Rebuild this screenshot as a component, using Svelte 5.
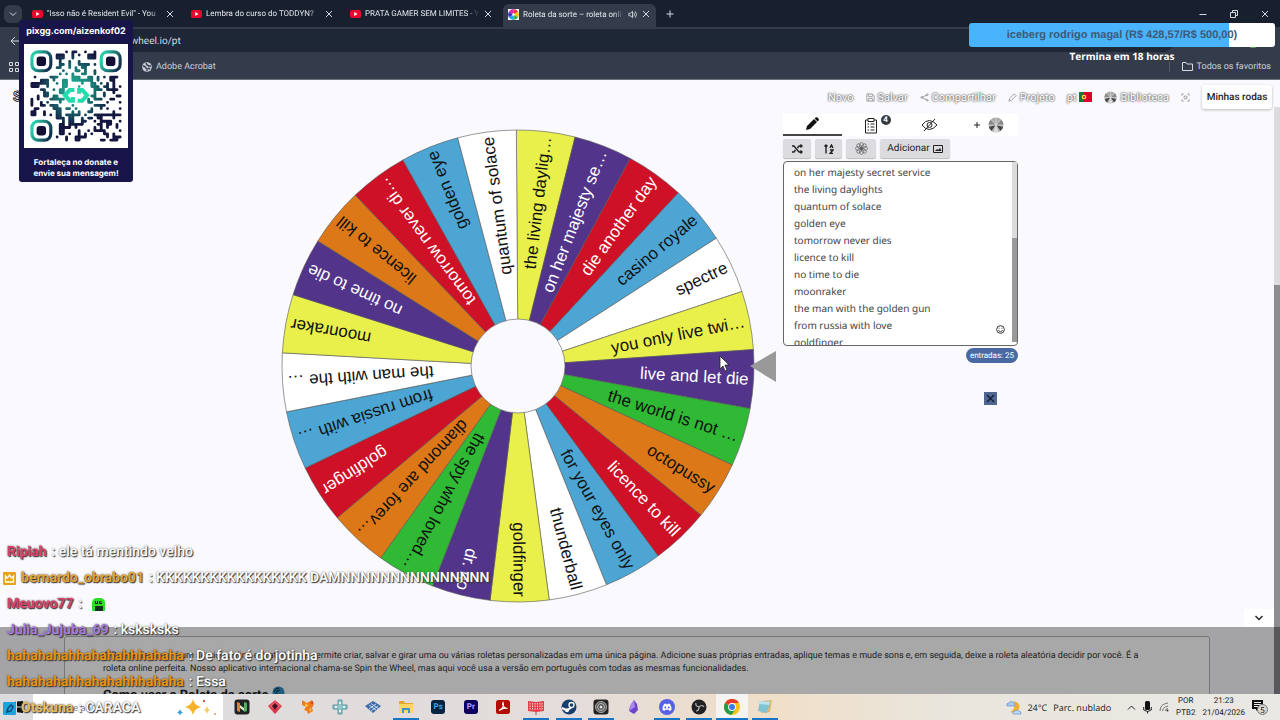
<script>
    const yellow = '#e9f04b', purple = '#52358a', red = '#ce1126', blue = '#4ca5d3', white = '#fff', green = '#2fb934', orange = '#dc7818'

    const slices = [
        ['the living daylig…', yellow], ['on her majesty se…', purple], ['die another day', red],
        ['casino royale', blue], ['spectre', white], ['you only live twi…', yellow],
        ['live and let die', purple], ['the world is not …', green], ['octopussy', orange],
        ['licence to kill', red], ['for your eyes only', blue], ['thunderball', white],
        ['goldfinger', yellow], ['dr. no', purple], ['the spy who loved…', green],
        ['diamond are forev…', orange], ['goldfinger', red], ['from russia with …', blue],
        ['the man with the …', white], ['moonraker', yellow], ['no time to die', purple],
        ['licence to kill', orange], ['tomorrow never di…', red], ['golden eye', blue],
        ['quantum of solace', white]
    ]

    const step = 360 / slices.length
    const start = -90.4
    const R = 236

    function point(deg) {
        const a = deg * Math.PI / 180
        return (R * Math.cos(a)).toFixed(2) + ' ' + (R * Math.sin(a)).toFixed(2)
    }

    function slicePath(i) {
        return `M0 0L${point(start + i * step)}A${R} ${R} 0 0 1 ${point(start + (i + 1) * step)}Z`
    }

    let entries = $state(`on her majesty secret service
the living daylights
quantum of solace
golden eye
tomorrow never dies
licence to kill
no time to die
moonraker
the man with the golden gun
from russia with love
goldfinger`)

    const tabs = ['"Isso não é Resident Evil" - You', 'Lembra do curso do TODDYN?', 'PRATA GAMER SEM LIMITES - Y']

    const chat = [
        { user: 'Ripiah', color: '#d9436f', text: 'ele tá mentindo velho' },
        { user: 'bernardo_obrabo01', color: '#e3a437', text: 'KKKKKKKKKKKKKKKKK DAMNNNNNNNNNNNNNNN', badge: 'crown' },
        { user: 'Meuovo77', color: '#d9436f', text: '', frog: true },
        { user: 'Julia_Jujuba_69', color: '#a77bdd', text: 'ksksksks' },
        { user: 'hahahahahhahahahhhahaha', color: '#e8920f', text: 'De fato é do jotinha' },
        { user: 'hahahahahhahahahhhahaha', color: '#e8920f', text: 'Essa' },
        { user: 'Otskuna', color: '#e5bd62', text: 'CARACA', badge: 'prime' }
    ]

    // QR modules, 29 x 29, joined to their neighbours by round strokes
    const N = 29
    function corner(x, y) {
        return (x < 8 && y < 8) || (x > 20 && y < 8) || (x < 8 && y > 20) || (x > 10 && x < 18 && y > 11 && y < 17)
    }
    function dark(x, y) {
        if (x >= N || y >= N || corner(x, y)) return false
        let h = (x * 73856093) ^ (y * 19349663) ^ 0x5bd1e
        h = Math.imul(h ^ (h >>> 13), 1274126177)
        return ((h ^ (h >>> 16)) & 255) < 122
    }
    let qr = ''
    for (let y = 0; y < N; y++) {
        for (let x = 0; x < N; x++) {
            if (!dark(x, y)) continue
            qr += `M${x + .5} ${y + .5}h.01`
            if (dark(x + 1, y)) qr += `M${x + .5} ${y + .5}h1`
            if (dark(x, y + 1)) qr += `M${x + .5} ${y + .5}v1`
        }
    }

    const apps = ['game', 'dice', 'fox', 'dpad', 'layers', 'files', 'Ps', 'Pr', 'acrobat', 'calendar', 'steam', 'disc', 'obsidian', 'discord', 'obs', 'chrome', 'notes']
    const open = ['files', 'calendar', 'steam', 'disc', 'discord', 'obs', 'chrome', 'notes']
</script>

{#snippet close()}
    <svg class="x" viewBox="0 0 10 10"><path d="M2 2l6 6M8 2l-6 6" /></svg>
{/snippet}

{#snippet miniwheel(size)}
    <svg width={size} height={size} viewBox="-8 -8 16 16">
        <circle r="7.5" fill="#aaa" stroke="none" />
        <path d="M0 0L-7 2A7.5 7.5 0 0 0 -4 6.300Z M0 0L4 6.300A7.500 7.500 0 0 0 7 2Z" fill="#444" stroke="none" />
        <path d="M0 0L-5 -5.500A7.500 7.500 0 0 0 -7.500 0Z M0 0L5 -5.500A7.500 7.500 0 0 1 7.500 0Z" fill="#888" stroke="none" />
        <path d="M0 0L-2.500 7A7.500 7.500 0 0 0 2.500 7Z" fill="#ddd" stroke="none" />
        <path d="M0 0V-7.500M0 0L-5 -5.500M0 0L5 -5.500M0 0H-7.500M0 0H7.500M0 0L-4 6M0 0L4 6" class="spokes" />
    </svg>
{/snippet}

<div class="screen">
    <div class="tabstrip">
        <button class="tabsearch" aria-label="Pesquisar guias"><svg width="8" height="8" viewBox="0 0 8 8"><path d="M1 2.500l3 3 3-3" class="line" /></svg></button>
        {#each tabs as tab}
            <div class="tab">
                <svg width="11" height="8" viewBox="0 0 11 8"><rect width="11" height="8" rx="2" fill="#e8082e" /><path d="M4.200 2v4l3.400-2z" fill="#fff" /></svg>
                <span>{tab}</span>
                <button aria-label="Fechar guia">{@render close()}</button>
            </div>
        {/each}
        <div class="tab active">
            <svg width="11" height="11" viewBox="0 0 12 12">
                <rect width="12" height="12" fill="#fff" />
                <path d="M6 6L6 0A6 6 0 0 1 11 3Z" fill="#e33" /><path d="M6 6L11 3A6 6 0 0 1 11 9Z" fill="#f5c400" />
                <path d="M6 6L11 9A6 6 0 0 1 6 12Z" fill="#36b04a" /><path d="M6 6V12A6 6 0 0 1 1 9Z" fill="#18a8e0" />
                <path d="M6 6L1 9A6 6 0 0 1 1 3Z" fill="#4034c8" /><path d="M6 6L1 3A6 6 0 0 1 6 0Z" fill="#e01cb4" />
                <circle cx="6" cy="6" r="1.500" fill="#fff" />
            </svg>
            <span>Roleta da sorte – roleta onli</span>
            <svg width="9" height="9" viewBox="0 0 10 10"><path d="M1 3.500h2l2-2v7l-2-2H1zM6.500 3q1.500 2 0 4M8 1.500q3 3.500 0 7" class="line" /></svg>
            <button aria-label="Fechar guia">{@render close()}</button>
        </div>
        <button class="plus" aria-label="Nova guia"><svg width="10" height="10" viewBox="0 0 10 10"><path d="M5 1.500v7M1.500 5h7" class="line" /></svg></button>
        <div class="window">
            <button aria-label="Minimizar"><svg width="10" height="10" viewBox="0 0 10 10"><path d="M1.500 5.500h7" class="line" /></svg></button>
            <button aria-label="Restaurar"><svg width="10" height="10" viewBox="0 0 10 10"><path d="M1.500 3.500h5v5h-5zM3.500 3.500v-2h5v5h-2" class="line" /></svg></button>
            <button aria-label="Fechar">{@render close()}</button>
        </div>
    </div>
    <div class="toolbar">
        <button aria-label="Voltar"><svg width="10" height="10" viewBox="0 0 10 10"><path d="M10 5H1M5 1L1 5l4 4" class="line" /></svg></button>
        <input class="url" aria-label="Endereço" value="spinthewheel.io/pt" />
        <span class="avatar"></span>
    </div>
    <div class="bookmarks">
        <svg class="grid" width="10" height="10" viewBox="0 0 10 10"><path d="M.5.5h3v3h-3zM6.500.5h3v3h-3zM.5 6.500h3v3h-3zM6.500 6.500h3v3h-3z" class="line" /></svg>
        <a href="#acrobat">
            <svg width="10" height="10" viewBox="0 0 10 10"><circle cx="5" cy="5" r="4.800" fill="#c9ced6" /><path d="M1 4q2 0 3 2l1 1v2M4 1l1 2 2 1h2M6 6l2 1" stroke="#343c4b" stroke-width="1.400" fill="none" /></svg>
            Adobe Acrobat
        </a>
        <a href="#favoritos" class="all">
            <svg width="11" height="9" viewBox="0 0 11 9"><path d="M.5.5h3.500l1 1.500h5.500v6.500H.5z" class="line" /></svg>
            Todos os favoritos
        </a>
    </div>

    <div class="page">
        <div class="content">
            <header>
                <span class="logo">S</span>
                <nav>
                    <a href="#novo">Novo</a>
                    <a href="#salvar"><svg width="9" height="9" viewBox="0 0 10 10"><path d="M1 1h6l2 2v6H1zM3 1v3h4V1M3 9V6h4v3" /></svg>Salvar</a>
                    <a href="#compartilhar"><svg width="9" height="9" viewBox="0 0 10 10"><path d="M8 2L2 5l6 3" /><circle cx="8" cy="2" r="1" /><circle cx="2" cy="5" r="1" /><circle cx="8" cy="8" r="1" /></svg>Compartilhar</a>
                    <a href="#projeto"><svg width="9" height="9" viewBox="0 0 10 10"><path d="M1 9l1-3 5-5 2 2-5 5z" /></svg>Projeto</a>
                    <a href="#pt">pt <svg class="flat" width="13" height="10" viewBox="0 0 13 10"><path fill="#d80027" d="M0 0h13v10H0z" /><path fill="#0b7a3b" d="M0 0h5v10H0z" /><circle cx="5" cy="5" r="2.300" fill="#ffda44" /><circle cx="5" cy="5" r="1" fill="#d80027" /></svg></a>
                    <a href="#biblioteca">{@render miniwheel(13)}Biblioteca</a>
                    <a href="#tela" aria-label="Tela cheia"><svg width="9" height="9" viewBox="0 0 10 10"><path d="M1 3V1h2M7 1h2v2M9 7v2H7M3 9H1V7M3.500 3.500h3v3h-3z" /></svg></a>
                    <button>Minhas rodas</button>
                </nav>
            </header>

            <main>
                <svg class="wheel" viewBox="-240 -240 500 480">
                    {#each slices as [name, color], i}
                        <path d={slicePath(i)} fill={color} class="slice" />
                        <text x="231" y="6" transform="rotate({start + (i + .5) * step})" fill={color == red || color == purple ? '#fff' : '#111'}>{name}</text>
                    {/each}
                    <circle r="47" fill="#fafafe" class="slice" />
                    <path d="M232 0l26-15v31z" fill="#999" />
                    <path d="M202-10v13l3-3 2 5 2-1-2-5h4z" fill="#fff" stroke="#222" stroke-width=".8" />
                </svg>

                <section class="panel">
                    <div class="modes">
                        <button class="on" aria-label="Editar"><svg width="14" height="14" viewBox="0 0 14 14"><path d="M1 13l1-4 7-7 3 3-7 7zM9.600 1.400l1-1q1-.6 2 .2l.8.8q.9 1 .2 2l-1 1z" fill="#111" /></svg></button>
                        <button aria-label="Resultados"><svg width="14" height="17" viewBox="0 0 14 17"><path d="M4 3H1.500v13h11V3H10M4 1.500h6v3H4zM3.500 7h1.500M6.500 7h4M3.500 10h1.500M6.500 10h4M3.500 13h1.500M6.500 13h4" class="ink" /></svg><b>4</b></button>
                        <button aria-label="Ocultar"><svg width="17" height="14" viewBox="0 0 17 14"><path d="M1 7q7-9 15 0q-8 9-15 0zM3 13L14 1" class="ink" /><circle cx="8.500" cy="7" r="2.500" class="ink" /></svg></button>
                        <button aria-label="Adicionar roda"><svg width="8" height="8" viewBox="0 0 8 8"><path d="M4 1v6M1 4h6" class="ink" /></svg>{@render miniwheel(16)}</button>
                    </div>
                    <div class="tools">
                        <button aria-label="Embaralhar"><svg width="11" height="10" viewBox="0 0 11 10"><path d="M0 2h2l5 6h3M0 8h2l1.500-2M5.500 4L7 2h3M8.500.5L10 2 8.500 3.500M8.500 6.500L10 8 8.500 9.500" class="bold" /></svg></button>
                        <button aria-label="Ordenar"><svg width="10" height="10" viewBox="0 0 10 10"><path d="M2 9.500V1M.5 2.500L2 1l1.500 1.500M6 4l1.500-3L9 4M6 6h3L6 9.500h3" class="bold" /></svg></button>
                        <button aria-label="Cores"><svg width="13" height="13" viewBox="-7 -7 14 14">
                            {#each [0, 45, 90, 135, 180, 225, 270, 315] as a}
                                <ellipse cx="0" cy="-3.500" rx="2" ry="3" transform="rotate({a})" fill="none" stroke="#555" stroke-width=".7" />
                            {/each}
                        </svg></button>
                        <button>Adicionar <svg width="10" height="8" viewBox="0 0 10 8"><path d="M.5.5h9v7h-9z" class="ink" /><path d="M2 6l2-2 1 1 2-2 1.500 3z" fill="#222" /></svg></button>
                    </div>
                    <div class="entries">
                        <textarea aria-label="Entradas" spellcheck="false" bind:value={entries}></textarea>
                        <span class="bar"></span>
                        <svg class="smile" width="9" height="9" viewBox="0 0 10 10"><circle cx="5" cy="5" r="4.300" class="ink" /><path d="M2.500 6q2.500 3 5 0M3.500 3v1M6.500 3v1" class="ink" /></svg>
                    </div>
                    <span class="count">entradas: 25</span>
                    <button class="dismiss" aria-label="Fechar anúncio"><svg width="13" height="13" viewBox="0 0 13 13"><path d="M3 3l7 7M10 3l-7 7" stroke="#111a33" stroke-width="1.400" /></svg></button>
                </section>
                <button class="more" aria-label="Mais"><svg width="10" height="8" viewBox="0 0 10 8"><path d="M1.500 2L5 5.500 8.500 2" class="bold" /></svg></button>
            </main>

            <section class="info">
                <article>
                    <p>A Roleta da sorte é um serviço online e gratuito que permite criar, salvar e girar uma ou várias roletas personalizadas em uma única página. Adicione suas próprias entradas, aplique temas e mude sons e, em seguida, deixe a roleta aleatória decidir por você. É a<br />roleta online perfeita. Nosso aplicativo internacional chama-se Spin the Wheel, mas aqui você usa a versão em português com todas as mesmas funcionalidades.</p>
                    <h2>Como usar a Roleta da sorte <svg width="13" height="13" viewBox="0 0 13 13"><circle cx="6.500" cy="6.500" r="6" fill="#1d5e80" /><path d="M2 6q1-4 5-4M4 8q0-4 4-4" stroke="#0c1c2c" fill="none" /></svg></h2>
                </article>
            </section>
        </div>
        <div class="scroll"><span></span></div>
    </div>

    <footer>
        <button class="start" aria-label="Iniciar"><svg width="12" height="12" viewBox="0 0 12 12"><path d="M0 1.500l5-.7v4.800H0zM6 .6L12 0v5.600H6zM0 6.500h5v4.800l-5-.7zM6 6.500h6V12l-6-.7z" fill="#111" /></svg></button>
        <label class="search">
            <input aria-label="Pesquisar" placeholder="Digite aqui" />
            <svg width="42" height="18" viewBox="0 0 42 18">
                <path d="M17 1q1 6 8 8q-7 2-8 8q-1-6-8-8q7-2 8-8z" fill="#f4b32c" />
                <path d="M31 8q.5 3 3 4q-2.500 1-3 4q-.5-3-3-4q2.500-1 3-4z" fill="#f7cc58" />
                <path d="M4 11q.5 3 3 3.500q-2.500.5-3 3q-.5-2.500-3-3q2.500-.5 3-3.500z" fill="#3aa0d8" />
                <circle cx="28" cy="3" r="1.200" fill="#e0584a" /><circle cx="39" cy="16" r="1" fill="#e89a40" />
            </svg>
        </label>
        <div class="apps">
            {#each apps as app}
                <button class:open={open.includes(app)} class:front={app == 'chrome'} aria-label={app}>
                    {#if app == 'Ps' || app == 'Pr'}
                        <span class={app}>{app}</span>
                    {:else}
                        <svg width="16" height="16" viewBox="0 0 16 16">
                            {#if app == 'game'}
                                <rect x=".5" y=".5" width="15" height="15" rx="3" fill="#222" /><path d="M3 3l3 1v9l-3-1z" fill="#e8793a" /><path d="M6 6l4 3v3L6 9z" fill="#e9e0c0" /><path d="M10 3l3 1v8l-3 1z" fill="#58ab60" />
                            {:else if app == 'dice'}
                                <path d="M8 2l6 5-6 7-6-7z" fill="#d9364c" stroke="#d9364c" stroke-width="1.500" stroke-linejoin="round" /><path d="M2 7l6-5 6 5-6 4z" fill="#ec5568" /><path d="M8 4l3 3-3 4-3-4z" fill="#401520" />
                            {:else if app == 'fox'}
                                <path d="M2 1l5 3 5-3 2 4-2 4 1 3-5 3-1-3-3-1 2-3-4-2z" fill="#ef7b1d" /><path d="M5 4l4 3-4 1zM9 10l3-1-2 4z" fill="#ffc43a" /><path d="M10 4l3-2v3z" fill="#d9381e" />
                            {:else if app == 'dpad'}
                                <path d="M6 1h4v5h5v4h-5v5H6v-5H1V6h5z" fill="#8fc5ca" stroke="#5f979f" /><path d="M8 3v2M8 11v2M3 8h2M11 8h2" stroke="#fff" stroke-width="1.500" />
                            {:else if app == 'layers'}
                                <path d="M8 2l8 5-8 7-8-7z" fill="#3d69a9" /><path d="M4 6l7 5M6 4.500l7 5M11 5l-7 5M13 7l-7 5" stroke="#dae4f2" stroke-width=".9" />
                            {:else if app == 'files'}
                                <path d="M1 2h5l1 2h8v10H1z" fill="#e2a631" /><path d="M1 5h14v9H1z" fill="#fbd765" /><path d="M4 14V9h8v5h-2v-3H6v3z" fill="#3f93d0" />
                            {:else if app == 'acrobat'}
                                <rect x="1" y="1" width="14" height="14" rx="2.500" fill="#b30b00" /><path d="M4 11.500c4-2 5-5 4-8c-1.500 2 1 6 4.500 6c-3-1-6 .5-8.500 2z" fill="none" stroke="#fff" stroke-width="1.200" />
                            {:else if app == 'calendar'}
                                <path d="M0 2l8 1 8-1v10l-8 1-8-1z" fill="#e63f4b" /><path d="M2 4v7M4.500 4v7M7 4v7M9.500 4v7M12 4v7M14 4v7" stroke="#fbd5d5" stroke-dasharray="1.500 1" /><path d="M8 13v3" stroke="#9b4a4a" />
                            {:else if app == 'steam'}
                                <circle cx="8" cy="8" r="7.500" fill="#173f6b" /><path d="M1 9l5 2.500 4-3" stroke="#fff" stroke-width="2" fill="none" /><circle cx="10.500" cy="6" r="2.500" fill="#173f6b" stroke="#fff" stroke-width="1.300" /><circle cx="6" cy="11.200" r="2" fill="#fff" />
                            {:else if app == 'disc'}
                                <rect x=".5" y=".5" width="15" height="15" rx="3" fill="#222" /><circle cx="8" cy="8" r="5.500" fill="#555" stroke="#ccc" stroke-width=".8" /><circle cx="8" cy="8" r="3.500" fill="none" stroke="#bbb" /><circle cx="8" cy="8" r="1.500" fill="#ddd" />
                            {:else if app == 'obsidian'}
                                <path d="M8 1l3 4 1 6-4 4-5-3 1-5z" fill="#6f43c8" /><path d="M8 1l1 7-6 4 1-5z" fill="#a887ef" />
                            {:else if app == 'discord'}
                                <circle cx="8" cy="8" r="8" fill="#5661e6" /><path d="M3.500 11q0-4 1.500-6l2-.5.4.8h1.200l.4-.8 2 .5q1.500 2 1.500 6l-2 1-.8-1.200H6.300L5.500 12z" fill="#fff" /><circle cx="6.300" cy="8.500" r="1" fill="#5661e6" /><circle cx="9.700" cy="8.500" r="1" fill="#5661e6" />
                            {:else if app == 'obs'}
                                <circle cx="8" cy="8" r="7.500" fill="#222225" /><path d="M8 8q-4-1-3-4M8 8q3-3 5 0M8 8q0 4-3 4" stroke="#bdbdbd" stroke-width="1.200" fill="none" />
                            {:else if app == 'chrome'}
                                <circle cx="8" cy="8" r="8" fill="#fbc116" /><path d="M8 8L1 4A8 8 0 0 1 15 4H8z" fill="#e33b2e" /><path d="M8 8L1 4A8 8 0 0 0 7.500 16L11.500 10z" fill="#259b48" /><circle cx="8" cy="8" r="3.900" fill="#fff" /><circle cx="8" cy="8" r="3" fill="#3b7de8" />
                            {:else}
                                <path d="M5 2l10-1-2 12-9 1z" fill="#d5ba78" /><path d="M3 2l10 1-3 11-9-2z" fill="#7fc4d3" /><path d="M3 2l10 1-1 3-10-1z" fill="#b9e3e9" />
                            {/if}
                        </svg>
                    {/if}
                </button>
            {/each}
        </div>
        <div class="tray">
            <svg width="17" height="17" viewBox="0 0 17 17"><path d="M9 2q7 2 5 8q-3 5-9 3q6-2 4-11z" fill="#f3ae2c" /><path d="M2 7q-1-3 2-3q1-3 4-1q2 0 2 4z" fill="#a9c9f3" stroke="#6691cf" stroke-width=".7" /><path d="M8 15q-1-3 2-3q2-2 4 0q2 0 2 3z" fill="#c3dafa" stroke="#6691cf" stroke-width=".7" /></svg>
            <span class="weather"><span>24°C</span> <span>Parc. nublado</span></span>
            <svg width="9" height="9" viewBox="0 0 9 9"><path d="M1 6.500L4.500 3 8 6.500" class="ink" /></svg>
            <svg width="9" height="13" viewBox="0 0 9 13"><rect x="2" width="5" height="9" rx="1.500" fill="#111" /><path d="M.7 6v3q4 3 7.600 0V6M4.500 10v2.500" class="ink" /></svg>
            <svg width="10" height="10" viewBox="0 0 10 10"><path d="M1 9Q1 2 9 1M3.500 9Q4 5 9 4M6 9Q6.500 7 9 6.500" stroke="#777" fill="none" /><circle cx="8.500" cy="8.500" r="1" fill="#333" /></svg>
            <span class="two">POR<br />PTB2</span>
            <span class="two">21:23<br />21/04/2026</span>
            <svg class="note" width="16" height="18" viewBox="0 0 16 18"><path d="M0 2h11v9H6l-2 2v-2H0z" fill="#111" /><path d="M2 4.500h7M2 6.500h7M2 8.500h4" stroke="#eee" /><circle cx="10.500" cy="11.500" r="5" fill="#dcd8d0" stroke="#777" /><text x="10.500" y="14.500">5</text></svg>
        </div>
    </footer>

    <aside class="donate">
        <strong>pixgg.com/aizenkof02</strong>
        <svg viewBox="-2 -2 33 33">
            <defs>
                <radialGradient id="ink" gradientUnits="userSpaceOnUse" cx="14" cy="12" r="16"><stop offset="0" stop-color="#22b89c" /><stop offset=".35" stop-color="#1a7f78" /><stop offset=".75" stop-color="#14163f" /></radialGradient>
                <linearGradient id="eye" gradientUnits="userSpaceOnUse" x1="0" y1="0" x2="7" y2="3"><stop offset=".2" stop-color="#2bd0aa" /><stop offset="1" stop-color="#14324f" /></linearGradient>
            </defs>
            <rect x="-2" y="-2" width="33" height="33" fill="#fff" />
            <path d={qr} stroke="url(#ink)" stroke-width=".9" stroke-linecap="round" fill="none" />
            {#each [[0, 0], [22, 0], [0, 22]] as [x, y]}
                <g transform="translate({x} {y})">
                    <rect x=".5" y=".5" width="6" height="6" rx="2" fill="none" stroke="url(#eye)" />
                    <rect x="2" y="2" width="3" height="3" rx="1" fill="#130f33" />
                </g>
            {/each}
            <path d="M14 12.600h-1.500l-1.500 1.700 1.500 1.700h1v-1.200M15 16h1.500l1.500-1.700-1.500-1.700h-1v1.200" fill="none" stroke="#22dcae" stroke-width="1.300" />
        </svg>
        <strong>Fortaleça no donate e<br />envie sua mensagem!</strong>
    </aside>

    <aside class="goal">
        <div><b>iceberg rodrigo magal (R$ 428,57/R$ 500,00)</b></div>
        <p>Termina em 18 horas</p>
    </aside>

    <ul class="chat">
        {#each chat as line}
            <li class:badged={line.badge}>
                {#if line.badge == 'crown'}
                    <svg width="13" height="13" viewBox="0 0 13 13"><rect width="13" height="13" rx="1" fill="#e9a21b" /><path d="M2.500 4l2 2 2-3 2 3 2-2v6h-8z" fill="none" stroke="#fff" stroke-width="1.300" /></svg>
                {:else if line.badge == 'prime'}
                    <svg width="13" height="13" viewBox="0 0 13 13"><rect width="13" height="13" rx="1" fill="#1ba3dc" /><path d="M4 10l1-4 3-3 2 2-2 4z" fill="none" stroke="#123f70" stroke-width="1.400" /></svg>
                {/if}
                <span style="color: {line.color}">{line.user}</span> : {line.text}
                {#if line.frog}
                    <svg class="frog" width="15" height="15" viewBox="0 0 15 15"><path d="M1 14V5q1-4 5-4h4q4 1 4 5v8z" fill="#2bdc28" /><path d="M4 14V9h8v5zM4 4h3v3H4zM8 4h3v3H8z" fill="#14301a" /><path d="M5 4.500h1v1H5zM9.500 4.500h1v1h-1z" fill="#fff" /></svg>
                {/if}
            </li>
        {/each}
    </ul>
</div>

<style>
    :global(body) {
        margin: 0;
        overflow: hidden;
    }

    .screen {
        position: relative;
        display: flex;
        flex-direction: column;
        height: 100vh;
        font-family: Roboto, sans-serif;
        font-size: 11px;
        color: #222;
        text-rendering: geometricPrecision;
        overflow: hidden;
    }

    button, input, textarea {
        font: inherit;
        color: inherit;
        text-rendering: inherit;
        border: 0;
        padding: 0;
        background: none;
    }

    button {
        display: flex;
        align-items: center;
        justify-content: center;
    }

    a {
        color: inherit;
        text-decoration: none;
    }

    svg {
        flex: none;
    }

    .line, .x path {
        fill: none;
        stroke: #d5d9e0;
        stroke-width: 1;
    }

    .ink {
        fill: none;
        stroke: #222;
        stroke-width: 1;
    }

    .bold {
        fill: none;
        stroke: #222;
        stroke-width: 1.4;
    }

    .spokes {
        stroke: #eee;
        stroke-width: .6;
    }

    .x {
        width: 10px;
        height: 10px;
    }

    /* browser */
    .tabstrip {
        display: flex;
        align-items: center;
        height: 27px;
        background: #182030;
        color: #e3e6eb;
        font-size: 8px;
    }

    .tabsearch {
        width: 18px;
        height: 18px;
        margin: 0 4px;
        border-radius: 6px;
        background: #343c4b;
    }

    .tab {
        display: flex;
        align-items: center;
        gap: 4px;
        width: 143px;
        height: 22px;
        padding: 0 10px 0 6px;
    }

    .tab span {
        flex: 1;
        overflow: hidden;
        white-space: nowrap;
        mask-image: linear-gradient(90deg, #000 90%, transparent);
    }

    .active {
        align-self: flex-end;
        width: 143px;
        height: 20px;
        padding: 0 5px 3px;
        border-radius: 6px 6px 0 0;
        background: #343c4b;
    }

    .plus {
        margin-left: 9px;
    }

    .window {
        display: flex;
        gap: 21px;
        margin-left: auto;
        padding-right: 10px;
    }

    .toolbar {
        display: flex;
        align-items: center;
        gap: 12px;
        height: 27px;
        padding: 0 10px;
        background: #343c4b;
        color: #d5d9e0;
    }

    .url {
        flex: 1;
        height: 21px;
        margin-right: 60px;
        padding: 2px 0 0 66px;
        border-radius: 12px;
        background: #1e2735;
        font-size: 10px;
    }

    .avatar {
        width: 14px;
        height: 14px;
        margin-right: 10px;
        border-radius: 50%;
        background: #56b558;
    }

    .bookmarks {
        display: flex;
        align-items: center;
        height: 25px;
        padding: 0 9px;
        border-bottom: 1px solid #6b7079;
        background: #343c4b;
        color: #c9ced6;
        font-size: 9px;
    }

    .grid {
        margin-right: 123px;
    }

    .bookmarks a {
        display: flex;
        align-items: center;
        gap: 4px;
    }

    .bookmarks .all {
        margin-left: auto;
        padding-left: 12px;
        border-left: 1px solid #555d6b;
    }

    /* page */
    .page {
        display: flex;
        flex: 1;
        min-height: 0;
        background: #fafafe;
    }

    .content {
        display: flex;
        flex: 1;
        flex-direction: column;
        min-width: 0;
    }

    .scroll {
        width: 6px;
        padding-top: 27px;
        background: linear-gradient(#fafafe 27px, #e3e3e6 27px);
        box-sizing: border-box;
    }

    .scroll span {
        display: block;
        height: 100%;
        background: linear-gradient(#dcdcdf 178px, #8e8e91 178px, #8e8e91 520px, #58585c 520px);
    }

    header {
        display: flex;
        align-items: center;
        justify-content: space-between;
        height: 34px;
        padding: 0 2px 0 13px;
    }

    .logo {
        color: #fff;
        font-size: 14px;
        font-weight: bold;
        line-height: 14px;
        -webkit-text-stroke: 1px #222;
    }

    nav {
        display: flex;
        align-items: center;
        gap: 12px;
    }

    nav a {
        display: flex;
        align-items: center;
        gap: 3px;
        color: #fff;
        text-shadow: 0 0 2px #444, 0 0 2px #666;
    }

    nav a svg {
        fill: none;
        stroke: #999;
    }

    nav .flat {
        stroke: none;
    }

    nav button {
        width: 70px;
        height: 24px;
        border-radius: 3px;
        background: #fff;
        box-shadow: 0 1px 3px #bbb;
        font-size: 10px;
        font-weight: 500;
    }

    main {
        position: relative;
        display: flex;
        flex: 1;
        justify-content: center;
        gap: 5px;
        min-height: 0;
        padding-left: 22px;
    }

    .wheel {
        width: 500px;
        height: 480px;
        margin-top: 12px;
    }

    .wheel text {
        font-family: "Liberation Sans", sans-serif;
        font-size: 17px;
        text-anchor: end;
    }

    .slice {
        stroke: #555;
        stroke-width: .6;
    }

    .panel {
        display: flex;
        flex-direction: column;
        width: 235px;
    }

    .modes {
        display: grid;
        grid-template-columns: repeat(4, 1fr);
        height: 22px;
        background: #fff;
    }

    .modes button {
        position: relative;
        gap: 7px;
    }

    .modes .on {
        border-bottom: 2px solid #444;
    }

    .modes b {
        position: absolute;
        top: 1px;
        right: 10px;
        width: 10px;
        border-radius: 5px;
        background: #333b40;
        color: #fff;
        font-size: 8px;
        line-height: 10px;
    }

    .tools {
        display: grid;
        grid-template-columns: 28px 27px 30px 70px;
        gap: 4px;
        margin: 3px 0;
    }

    .tools button {
        gap: 3px;
        height: 19px;
        border-radius: 2px;
        background: #dcdce0;
        box-shadow: 0 1px 1px #bbb;
        font-size: 10px;
    }

    .entries {
        position: relative;
        height: 185px;
    }

    textarea {
        display: block;
        box-sizing: border-box;
        width: 100%;
        height: 100%;
        padding: 2px 10px;
        border: 1px solid #666;
        border-radius: 4px;
        background: #fff;
        color: #444;
        font-family: "Noto Sans", sans-serif;
        font-size: 10px;
        line-height: 17px;
        resize: none;
        overflow: hidden;
    }

    .bar {
        position: absolute;
        top: 1px;
        right: 1px;
        width: 5px;
        height: 180px;
        background: linear-gradient(#dcdcdc 76px, #999 76px);
    }

    .smile {
        position: absolute;
        right: 13px;
        bottom: 12px;
    }

    .count {
        align-self: flex-end;
        margin-top: 2px;
        padding: 0 4px;
        border-radius: 8px;
        background: #4a69a3;
        color: #fff;
        font-size: 8px;
        line-height: 15px;
    }

    .dismiss {
        align-self: flex-end;
        margin: 29px 21px 0 0;
        background: #4f6890;
    }

    .more {
        position: absolute;
        right: 0;
        bottom: 0;
        width: 30px;
        height: 18px;
        background: #fff;
    }

    .info {
        box-sizing: border-box;
        height: 67px;
        padding: 9px 64px 0;
        background: #a4a4a6;
        overflow: hidden;
    }

    article {
        height: 90px;
        padding: 13px 20px 13px 38px;
        border: 1px solid #777;
        border-radius: 3px;
        background: #a8a8a8;
    }

    p, h2 {
        margin: 0;
    }

    article p {
        font-size: 9px;
        line-height: 13px;
    }

    h2 {
        margin-top: 10px;
        color: #111;
        font-size: 13px;
        line-height: 16px;
    }

    /* taskbar */
    footer {
        display: flex;
        height: 26px;
        background: linear-gradient(90deg, #dcdcde, #e3dcda 45%, #f0dfc8 60%, #e9e6de 75%, #eae8e4);
    }

    .start {
        width: 33px;
    }

    .search {
        display: flex;
        align-items: center;
        justify-content: space-between;
        width: 164px;
        padding: 0 5px 0 21px;
        background: #fff;
    }

    .search input {
        width: 60px;
        font-family: "Open Sans", sans-serif;
        font-size: 9px;
    }

    .apps {
        display: grid;
        grid-template-columns: repeat(17, 1fr);
        width: 555px;
        margin-left: 3px;
    }

    .apps .open {
        background: linear-gradient(#1874c4, #1874c4) bottom / 26px 2px no-repeat;
    }

    .apps .front {
        background-color: #f5f4f2;
        background-size: 32px 2px;
    }

    .Ps, .Pr {
        width: 14px;
        border-radius: 3px;
        background: #06233f;
        color: #38a8f5;
        font-size: 8px;
        font-weight: bold;
        line-height: 14px;
    }

    .Pr {
        background: #0c005c;
        color: #b4a4f8;
    }

    .tray {
        display: flex;
        align-items: center;
        gap: 7px;
        margin-left: auto;
        padding-right: 12px;
        font-family: "Open Sans", sans-serif;
        font-size: 9px;
    }

    .weather {
        display: flex;
        gap: 6px;
        margin: 0 9px 0 -2px;
    }

    .two {
        font-family: Roboto, sans-serif;
        font-size: 8px;
        line-height: 12px;
        text-align: center;
    }

    .note text {
        font-size: 8px;
        text-anchor: middle;
    }

    /* stream overlays */
    .donate {
        position: absolute;
        top: 20px;
        left: 19px;
        display: flex;
        flex-direction: column;
        align-items: center;
        width: 114px;
        height: 162px;
        border-radius: 3px;
        background: #17154a;
        color: #fff;
        font-family: Inter, sans-serif;
        font-size: 8px;
        line-height: 11px;
        text-align: center;
    }

    .donate strong:first-child {
        font-size: 9px;
        line-height: 24px;
    }

    .donate svg {
        width: 104px;
        height: 104px;
        margin-bottom: 9px;
    }

    .goal {
        position: absolute;
        top: 23px;
        right: 5px;
        width: 306px;
        text-align: center;
    }

    .goal div {
        border-radius: 3px;
        background: linear-gradient(90deg, #49b3fd 85%, #fff 85%);
        color: #3f5a73;
        font-family: "Liberation Sans", sans-serif;
        font-size: 11px;
        line-height: 24px;
    }

    .goal p {
        color: #fff;
        font-family: "Open Sans", sans-serif;
        font-size: 10px;
        font-weight: bold;
        line-height: 18px;
    }

    .chat {
        position: absolute;
        left: 7px;
        bottom: -1px;
        margin: 0;
        padding: 0;
        color: #fff;
        font-size: 14px;
        font-weight: 500;
        line-height: 26px;
        list-style: none;
        white-space: nowrap;
        text-shadow: 1px 1px 1px #333, 0 0 2px #555;
    }

    .chat li {
        display: flex;
        align-items: center;
        gap: 5px;
        height: 26px;
    }

    .chat li span {
        font-weight: bold;
    }

    .chat .badged {
        margin-left: -4px;
    }

    .frog {
        margin-left: 4px;
    }
</style>
